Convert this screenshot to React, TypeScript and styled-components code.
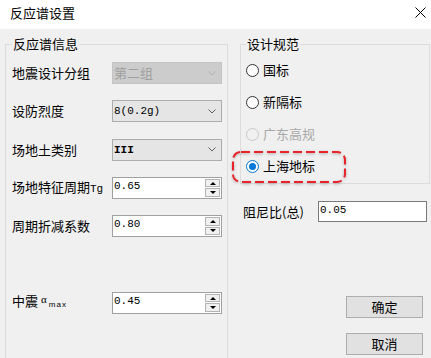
import React from 'react';
import styled, { createGlobalStyle } from 'styled-components';

const GlobalStyle = createGlobalStyle`
  html, body {
    margin: 0;
    padding: 0;
    width: 431px;
    height: 358px;
    overflow: hidden;
    background: #f0f0f0;
  }
  body {
    font-family: "Noto Sans CJK SC", "Noto Sans", sans-serif;
    font-size: 13px;
    color: #000;
  }
  * { box-sizing: border-box; }
`;

const Dialog = styled.div`
  width: 431px;
  height: 358px;
  display: flex;
  flex-direction: column;
  background: #f0f0f0;
  overflow: hidden;
`;

const TitleBar = styled.div`
  height: 29px;
  flex: none;
  background: #fff;
  display: flex;
  align-items: flex-start;
  padding: 5px 5px 0 10px;
`;

const Title = styled.span`
  font-size: 13px;
  line-height: 16px;
`;

const CloseIcon = styled.svg`
  margin-left: auto;
  margin-top: 2px;
  width: 11px;
  height: 11px;
`;

const Body = styled.div`
  flex: 1;
  display: flex;
  align-items: flex-start;
  gap: 12px;
  padding: 7px 0 0 5px;
`;

const GroupBox = styled.fieldset<{ $width: number; $height: number; $padLeft: number; $padTop: number }>`
  margin: 0;
  min-inline-size: 0;
  width: ${(p) => p.$width}px;
  height: ${(p) => p.$height}px;
  border: 1px solid #dcdcdc;
  padding: ${(p) => p.$padTop}px 4px 0 ${(p) => p.$padLeft}px;
`;

const Legend = styled.legend`
  padding: 0 1px;
  font-size: 13px;
  line-height: 16px;
`;

const FormGrid = styled.div`
  display: grid;
  grid-template-columns: 100px 110px;
  grid-auto-rows: 22px;
  row-gap: 16.3px;
  align-items: center;
`;

const Label = styled.span`
  font-size: 13px;
  line-height: 16px;
  white-space: nowrap;
`;

const Spacer = styled.div`
  grid-column: 1 / span 2;
`;

const Mono = styled.span<{ $bold?: boolean }>`
  font-family: "Liberation Mono", monospace;
  font-size: 11px;
  font-weight: ${(p) => (p.$bold ? 700 : 400)};
`;

const Alpha = styled.span`
  font-family: "Liberation Serif", serif;
  font-size: 11px;
  margin-left: 3px;
  position: relative;
  top: -3px;
`;

const Sub = styled.span`
  font-family: "Liberation Sans", sans-serif;
  font-size: 8px;
  letter-spacing: 1px;
  margin-left: 2px;
  position: relative;
  top: 1px;
`;

const Select = styled.div<{ $disabled?: boolean }>`
  height: 22px;
  display: flex;
  align-items: center;
  justify-content: space-between;
  padding: 0 5px 0 1px;
  border: 1px solid ${(p) => (p.$disabled ? '#c4c4c4' : '#adadad')};
  background: ${(p) => (p.$disabled ? '#cccccc' : '#e5e5e5')};
  color: ${(p) => (p.$disabled ? '#a0a0a0' : '#000')};
  line-height: 16px;
`;

const Chevron = styled.svg<{ $disabled?: boolean }>`
  width: 8px;
  height: 5px;
  stroke: ${(p) => (p.$disabled ? '#b0b0b0' : '#606060')};
`;

const Spinner = styled.div`
  height: 22px;
  display: flex;
  background: #fff;
  border: 1px solid #a0a0a0;
`;

const SpinValue = styled.span`
  flex: 1;
  font-family: "Liberation Mono", monospace;
  font-size: 11px;
  line-height: 14px;
  padding: 1px 0 0 1px;
`;

const SpinButtons = styled.div`
  width: 15px;
  display: flex;
  flex-direction: column;
  gap: 1px;
  margin: 1px 1px 1px 0;
`;

const SpinButton = styled.div<{ $dir: 'up' | 'down' }>`
  flex: 1;
  border: 1px solid #b4b4b4;
  background: #f0f0f0;
  display: flex;
  align-items: center;
  justify-content: center;
  &::before {
    content: '';
    border-left: 3px solid transparent;
    border-right: 3px solid transparent;
    ${(p) => (p.$dir === 'up' ? 'border-bottom: 3px solid #000;' : 'border-top: 3px solid #000;')}
  }
`;

const RightColumn = styled.div`
  width: 190px;
  display: flex;
  flex-direction: column;
`;

const RadioList = styled.div`
  display: flex;
  flex-direction: column;
  gap: 12px;
`;

const RadioRow = styled.div<{ $disabled?: boolean }>`
  position: relative;
  height: 20px;
  display: flex;
  align-items: center;
  gap: 4px;
  line-height: 16px;
  color: ${(p) => (p.$disabled ? '#a8a8a8' : '#000')};
`;

const RadioCircle = styled.span<{ $checked?: boolean; $disabled?: boolean }>`
  width: 13px;
  height: 13px;
  flex: none;
  border-radius: 50%;
  border: 1px solid ${(p) => (p.$checked ? '#0078d7' : p.$disabled ? '#c8c8c8' : '#333')};
  background: ${(p) => (p.$disabled ? '#f0f0f0' : '#fff')};
  display: flex;
  align-items: center;
  justify-content: center;
  &::after {
    content: '';
    width: 7px;
    height: 7px;
    border-radius: 50%;
    background: ${(p) => (p.$checked ? '#0078d7' : 'transparent')};
  }
`;

const Highlight = styled.svg`
  position: absolute;
  left: -14px;
  top: -5px;
  width: 114px;
  height: 32px;
  overflow: visible;
  pointer-events: none;
  filter: drop-shadow(0 1px 1.5px rgba(0, 0, 0, 0.3));
`;

const FieldRow = styled.div`
  display: flex;
  align-items: center;
  margin-top: 17px;
  padding-left: 3px;
`;

const FieldLabel = styled.span`
  width: 75px;
  line-height: 16px;
  white-space: nowrap;
`;

const TextInput = styled.div`
  width: 109px;
  height: 21px;
  background: #fff;
  border: 1px solid #7a7a7a;
  font-family: "Liberation Mono", monospace;
  font-size: 11px;
  line-height: 14px;
  padding: 1px 0 0 1px;
`;

const ButtonStack = styled.div`
  display: flex;
  flex-direction: column;
  align-items: flex-end;
  gap: 15px;
  margin-top: 74px;
  padding-right: 7px;
`;

const Button = styled.button`
  width: 77px;
  height: 22px;
  padding: 0;
  background: #e1e1e1;
  border: 1px solid #adadad;
  font-family: "Noto Sans CJK SC", sans-serif;
  font-size: 13px;
  line-height: 16px;
  color: #000;
`;

const ChevronIcon = ({ disabled }: { disabled?: boolean }) => (
  <Chevron $disabled={disabled} viewBox="0 0 8 5" fill="none" strokeWidth={1}>
    <polyline points="0.5,0.5 4,4 7.5,0.5" />
  </Chevron>
);

const SpinBox = ({ value }: { value: string }) => (
  <Spinner>
    <SpinValue>{value}</SpinValue>
    <SpinButtons>
      <SpinButton $dir="up" />
      <SpinButton $dir="down" />
    </SpinButtons>
  </Spinner>
);

const radios = [
  { label: '国标' },
  { label: '新隔标' },
  { label: '广东高规', disabled: true },
  { label: '上海地标', checked: true },
];

export default function App() {
  return (
    <>
      <GlobalStyle />
      <Dialog>
        <TitleBar>
          <Title>反应谱设置</Title>
          <CloseIcon viewBox="0 0 11 11" fill="none" stroke="#000" strokeWidth={1}>
            <path d="M0.5 0.5 L10.5 10.5 M10.5 0.5 L0.5 10.5" />
          </CloseIcon>
        </TitleBar>
        <Body>
          <GroupBox $width={223} $height={340} $padLeft={6} $padTop={10}>
            <Legend>反应谱信息</Legend>
            <FormGrid>
              <Label>地震设计分组</Label>
              <Select $disabled>
                <span>第二组</span>
                <ChevronIcon disabled />
              </Select>

              <Label>设防烈度</Label>
              <Select>
                <Mono>8(0.2g)</Mono>
                <ChevronIcon />
              </Select>

              <Label>场地土类别</Label>
              <Select>
                <Mono $bold>III</Mono>
                <ChevronIcon />
              </Select>

              <Label>
                场地特征周期<Mono>Tg</Mono>
              </Label>
              <SpinBox value="0.65" />

              <Label>周期折减系数</Label>
              <SpinBox value="0.80" />

              <Spacer />

              <Label>
                中震<Alpha>α</Alpha>
                <Sub>max</Sub>
              </Label>
              <SpinBox value="0.45" />
            </FormGrid>
          </GroupBox>

          <RightColumn>
            <GroupBox $width={190} $height={148} $padLeft={5} $padTop={8}>
              <Legend>设计规范</Legend>
              <RadioList>
                {radios.map((r) => (
                  <RadioRow key={r.label} $disabled={r.disabled}>
                    <RadioCircle $checked={r.checked} $disabled={r.disabled} />
                    <span>{r.label}</span>
                    {r.checked && (
                      <Highlight viewBox="0 0 114 32">
                        <rect
                          x="1"
                          y="1"
                          width="112"
                          height="30"
                          rx="8"
                          fill="none"
                          stroke="#e8232a"
                          strokeWidth="2"
                          strokeDasharray="9 4"
                        />
                      </Highlight>
                    )}
                  </RadioRow>
                ))}
              </RadioList>
            </GroupBox>

            <FieldRow>
              <FieldLabel>阻尼比(总)</FieldLabel>
              <TextInput>0.05</TextInput>
            </FieldRow>

            <ButtonStack>
              <Button>确定</Button>
              <Button>取消</Button>
            </ButtonStack>
          </RightColumn>
        </Body>
      </Dialog>
    </>
  );
}
